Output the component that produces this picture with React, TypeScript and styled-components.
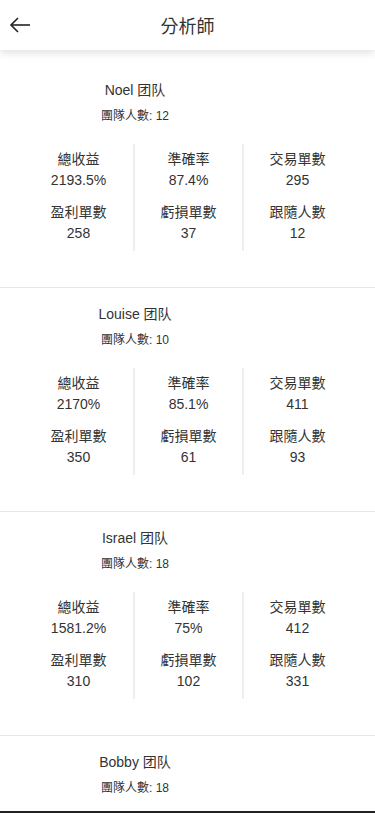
import * as React from "react";
import styled, { createGlobalStyle } from "styled-components";

const GlobalStyle = createGlobalStyle`
  html, body {
    margin: 0;
    padding: 0;
    background: #fff;
  }
  body {
    font-family: "Liberation Sans", Arial, "Noto Sans CJK TC", sans-serif;
    color: #333;
  }
  * {
    box-sizing: border-box;
  }
`;

const Page = styled.div`
  width: 375px;
  height: 813px;
  display: flex;
  flex-direction: column;
  overflow: hidden;
  position: relative;
`;

const Header = styled.div`
  flex: none;
  height: 50px;
  display: flex;
  align-items: center;
  justify-content: center;
  position: relative;
  background: #fff;
  box-shadow: 0 3px 8px rgba(0, 0, 0, 0.12);
  z-index: 2;

  > h1 {
    margin: 0;
    font-size: 18px;
    font-weight: 400;
    color: #333;
  }
`;

const BackButton = styled.button`
  position: absolute;
  left: 8px;
  top: 13px;
  width: 24px;
  height: 24px;
  padding: 0;
  border: none;
  background: none;
  display: flex;
  align-items: center;
  justify-content: center;
`;

const List = styled.div`
  flex: 1;
  overflow-y: auto;
  padding-top: 14px;
  scrollbar-width: none;
`;

const Card = styled.div`
  height: 224px;
  border-bottom: 1px solid #e6e6e6;
  padding-top: 18px;
`;

const TeamInfo = styled.div`
  width: 270px;
  display: flex;
  flex-direction: column;
  align-items: center;
`;

const TeamName = styled.div`
  font-size: 14px;
  line-height: 16px;
  color: #333;
`;

const TeamCount = styled.div`
  margin-top: 11px;
  font-size: 12px;
  line-height: 14px;
  color: #333;
`;

const Stats = styled.div`
  margin: 21px 24px 0;
  display: grid;
  grid-template-columns: 1fr 1fr 1fr;
`;

const StatColumn = styled.div<{ $divider?: boolean }>`
  display: flex;
  flex-direction: column;
  align-items: center;
  gap: 11px;
  padding: 5px 0 7px;
  border-left: ${(p) => (p.$divider ? "2px solid #eeeeee" : "none")};
`;

const Stat = styled.div`
  display: flex;
  flex-direction: column;
  align-items: center;
  font-size: 14px;
  line-height: 21px;
  color: #333;
`;

type Team = {
  name: string;
  count: number;
  stats?: [string, string][];
};

const teams: Team[] = [
  {
    name: "Noel",
    count: 12,
    stats: [
      ["總收益", "2193.5%"],
      ["盈利單數", "258"],
      ["準確率", "87.4%"],
      ["虧損單數", "37"],
      ["交易單數", "295"],
      ["跟隨人數", "12"],
    ],
  },
  {
    name: "Louise",
    count: 10,
    stats: [
      ["總收益", "2170%"],
      ["盈利單數", "350"],
      ["準確率", "85.1%"],
      ["虧損單數", "61"],
      ["交易單數", "411"],
      ["跟隨人數", "93"],
    ],
  },
  {
    name: "Israel",
    count: 18,
    stats: [
      ["總收益", "1581.2%"],
      ["盈利單數", "310"],
      ["準確率", "75%"],
      ["虧損單數", "102"],
      ["交易單數", "412"],
      ["跟隨人數", "331"],
    ],
  },
  { name: "Bobby", count: 18 },
];

const BottomLine = styled.div`
  position: absolute;
  left: 0;
  right: 0;
  bottom: 0;
  height: 2px;
  background: #222;
`;

const App: React.FC = () => {
  return (
    <>
      <GlobalStyle />
      <Page>
        <Header>
          <BackButton>
            <svg width="22" height="16" viewBox="0 0 22 16" fill="none" stroke="#222" strokeWidth="1.6">
              <path d="M21 8H2" />
              <path d="M9 1L2 8l7 7" />
            </svg>
          </BackButton>
          <h1>分析師</h1>
        </Header>
        <List>
          {teams.map((t) => (
            <Card key={t.name}>
              <TeamInfo>
                <TeamName>{t.name} 团队</TeamName>
                <TeamCount>團隊人數: {t.count}</TeamCount>
              </TeamInfo>
              {t.stats && (
                <Stats>
                  {[0, 1, 2].map((col) => (
                    <StatColumn key={col} $divider={col > 0}>
                      {t.stats!.slice(col * 2, col * 2 + 2).map(([label, value]) => (
                        <Stat key={label}>
                          <span>{label}</span>
                          <span>{value}</span>
                        </Stat>
                      ))}
                    </StatColumn>
                  ))}
                </Stats>
              )}
            </Card>
          ))}
        </List>
        <BottomLine />
      </Page>
    </>
  );
};

export default App;
